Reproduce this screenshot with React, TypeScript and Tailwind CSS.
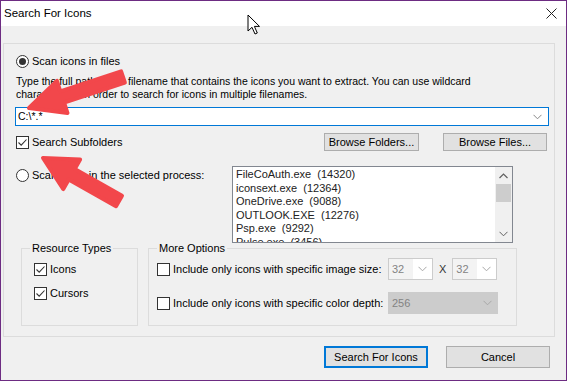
import React from 'react';

const font = "font-['Segoe_UI','Liberation_Sans',Arial,sans-serif]";

function Radio({ checked }: { checked?: boolean }) {
    return (
        <span className="flex h-[13px] w-[13px] shrink-0 items-center justify-center rounded-full border border-[#333333] bg-white">
            {checked && <span className="h-[7px] w-[7px] rounded-full bg-[#333333]" />}
        </span>
    );
}

function Checkbox({ checked }: { checked?: boolean }) {
    return (
        <span className="flex h-[13px] w-[13px] shrink-0 items-center justify-center border border-[#333333] bg-white">
            {checked && (
                <svg width="11" height="11" viewBox="0 0 11 11">
                    <path d="M1.5 5.5 L4.2 8.2 L9.5 2.5" fill="none" stroke="#333333" strokeWidth="1.1" />
                </svg>
            )}
        </span>
    );
}

function Chevron({ color = '#606060' }: { color?: string }) {
    return (
        <svg width="9" height="6" viewBox="0 0 9 6">
            <path d="M0.5 0.8 L4.5 4.8 L8.5 0.8" fill="none" stroke={color} strokeWidth="1" />
        </svg>
    );
}

function Button({ label, width, primary }: { label: string; width: string; primary?: boolean }) {
    return (
        <div
            className={`flex items-center justify-center bg-[#e1e1e1] text-[11px] text-black ${width} ${
                primary ? 'h-[22px] border-2 border-[#0078d7]' : 'border border-[#adadad]'
            }`}
        >
            {label}
        </div>
    );
}

function SizeCombo() {
    return (
        <div className="flex h-[22px] w-[45px] items-center border border-[#cccccc] bg-white pr-[5px]">
            <span className="flex h-full w-[24px] items-center bg-[#f3f3f3] pl-[3px] text-[11px] text-[#838383]">32</span>
            <span className="ml-auto flex">
                <Chevron color="#a8a8a8" />
            </span>
        </div>
    );
}

const processes = [
    'FileCoAuth.exe  (14320)',
    'iconsext.exe  (12364)',
    'OneDrive.exe  (9088)',
    'OUTLOOK.EXE  (12276)',
    'Psp.exe  (9292)',
    'Pulse.exe  (3456)',
];

export default function App() {
    return (
        <div className={`relative flex h-[381px] w-[567px] flex-col overflow-hidden border border-[#6d2c82] bg-[#f0f0f0] text-[10.5px] text-black ${font}`}>
            {/* title bar */}
            <div className="flex h-[25px] shrink-0 items-center bg-white">
                <span className="pl-[3px] text-[11.5px]">Search For Icons</span>
                <svg className="ml-auto mr-[9px]" width="11" height="11" viewBox="0 0 11 11">
                    <path d="M0.5 0.5 L10.5 10.5 M10.5 0.5 L0.5 10.5" stroke="#222222" strokeWidth="1" />
                </svg>
            </div>

            <div className="flex flex-col px-[2px] pt-[17px]">
                {/* outer group */}
                <div className="flex h-[294px] w-[552px] flex-col border border-[#dcdcdc] pl-[12px]">
                    <div className="mt-[11px] flex items-center gap-[3px] leading-[13px]">
                        <Radio checked />
                        <span className="text-[11px]">Scan icons in files</span>
                    </div>

                    <p className="mt-[7px] leading-[13px]">
                        Type the full path of the filename that contains the icons you want to extract. You can use wildcard
                        <br />
                        characters (*) in order to search for icons in multiple filenames.
                    </p>

                    <div className="mt-[6px] -ml-[1px] flex h-[19px] w-[534px] items-center border border-[#0078d7] bg-white pl-[2px] pr-[6px]">
                        <span className="flex-1">C:\*.*</span>
                        <Chevron color="#888888" />
                    </div>

                    <div className="mt-[7px] flex items-center">
                        <Checkbox checked />
                        <span className="ml-[3px] text-[11px]">Search Subfolders</span>
                        <div className="ml-auto mr-[7px] flex gap-[24px]">
                            <Button label="Browse Folders..." width="h-[18px] w-[95px]" />
                            <Button label="Browse Files..." width="h-[18px] w-[104px]" />
                        </div>
                    </div>

                    <div className="mt-[15px] flex">
                        <div className="flex w-[216px] items-center gap-[3px] self-start pt-[3px] leading-[13px]">
                            <Radio />
                            <span className="text-[11px]">Scan icons in the selected process:</span>
                        </div>
                        <div className="flex h-[77px] w-[281px] border border-[#828790] bg-white">
                            <div className="flex-1 overflow-hidden pl-[3px] pt-[1px] text-[11px] leading-[13.5px] text-[#222222]">
                                {processes.map((p) => (
                                    <div key={p} className="whitespace-pre">
                                        {p}
                                    </div>
                                ))}
                            </div>
                            <div className="flex w-[17px] flex-col items-center bg-[#f0f0f0]">
                                <div className="flex h-[17px] items-center justify-center">
                                    <svg width="9" height="6" viewBox="0 0 9 6">
                                        <path d="M0.5 5 L4.5 1 L8.5 5" fill="none" stroke="#606060" strokeWidth="1.2" />
                                    </svg>
                                </div>
                                <div className="h-[18px] w-[15px] bg-[#cdcdcd]" />
                                <div className="mt-auto flex h-[17px] items-center justify-center">
                                    <Chevron />
                                </div>
                            </div>
                        </div>
                    </div>

                    <div className="-mt-[1px] flex gap-[10px] pl-[5px] text-[11px]">
                        <fieldset className="h-[84px] w-[117px] border border-[#dcdcdc] p-0">
                            <legend className="ml-[8px] px-[2px] leading-[13px]">Resource Types</legend>
                            <div className="flex flex-col pl-[12px]">
                                <div className="mt-[8px] flex items-center gap-[3px] leading-[13px]">
                                    <Checkbox checked />
                                    <span>Icons</span>
                                </div>
                                <div className="mt-[11px] flex items-center gap-[3px] leading-[13px]">
                                    <Checkbox checked />
                                    <span>Cursors</span>
                                </div>
                            </div>
                        </fieldset>

                        <fieldset className="h-[84px] w-[369px] border border-[#dcdcdc] p-0">
                            <legend className="ml-[8px] px-[2px] leading-[13px]">More Options</legend>
                            <div className="flex flex-col pl-[8px]">
                                <div className="mt-[3px] flex items-center">
                                    <Checkbox />
                                    <span className="ml-[3px] w-[215px] whitespace-nowrap">Include only icons with specific image size:</span>
                                    <SizeCombo />
                                    <span className="mx-[6px] text-[#333333]">X</span>
                                    <SizeCombo />
                                </div>
                                <div className="mt-[12px] flex items-center">
                                    <Checkbox />
                                    <span className="ml-[3px] w-[215px] whitespace-nowrap">Include only icons with specific color depth:</span>
                                    <div className="flex h-[22px] w-[110px] items-center border border-[#cccccc] bg-[#cccccc] pl-[3px] pr-[5px] text-[#838383]">
                                        <span>256</span>
                                        <span className="ml-auto flex">
                                            <Chevron color="#a8a8a8" />
                                        </span>
                                    </div>
                                </div>
                            </div>
                        </fieldset>
                    </div>
                </div>

                <div className="mt-[9px] flex justify-end gap-[18px] pr-[14px]">
                    <Button label="Search For Icons" width="w-[104px]" primary />
                    <Button label="Cancel" width="h-[22px] w-[104px]" />
                </div>
            </div>

            {/* annotation arrows */}
            <svg className="pointer-events-none absolute left-0 top-0" width="567" height="381" viewBox="0 0 567 381">
                <g fill="#f2474b" stroke="#f2474b" strokeWidth="4" strokeLinejoin="round">
                    <polygon points="28,107 66.5,112.1 63.1,101.7 123.9,81.7 120.1,70.3 59.3,90.3 55.9,79.9" />
                    <polygon points="42,157 79.1,158.5 73.7,168.1 121,194.8 115,205.2 67.7,178.5 62.3,188.1" />
                </g>
            </svg>

            {/* mouse cursor */}
            <svg className="pointer-events-none absolute left-[246px] top-[13px]" width="14" height="22" viewBox="0 0 14 22">
                <path d="M1 1 L1 17 L5 13.3 L8 20 L10.3 19 L7.4 12.4 L12.5 12.4 Z" fill="white" stroke="black" strokeWidth="1" strokeLinejoin="round" />
            </svg>
        </div>
    );
}
